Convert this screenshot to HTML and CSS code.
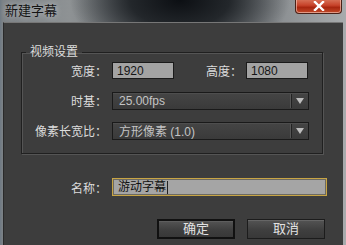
FILE: index.html
```html
<!DOCTYPE html>
<html lang="zh-CN">
  <head>
    <meta charset="UTF-8" />
    <meta name="viewport" content="width=device-width, initial-scale=1.0" />
    <title>新建字幕</title>
    <link rel="stylesheet" href="styles.css">
  </head>
  <body>
    <div class="window">
      <div class="titlebar">
        <span class="title">新建字幕</span>
        <div class="close-btn">
          <svg width="14" height="10" viewBox="0 0 14 10">
            <path d="M3 1 L11 9 M11 1 L3 9" stroke="#fff" stroke-width="2.4" stroke-linecap="square" />
          </svg>
        </div>
      </div>

      <div class="dialog">
        <fieldset class="video-settings">
          <legend>视频设置</legend>

          <div class="row">
            <label class="label">宽度：</label>
            <input class="text-input small" type="text" value="1920" />
            <label class="label label-right">高度：</label>
            <input class="text-input small" type="text" value="1080" />
          </div>

          <div class="row">
            <label class="label">时基：</label>
            <div class="select">
              <span class="select-value">25.00fps</span>
              <span class="select-arrow"></span>
            </div>
          </div>

          <div class="row">
            <label class="label">像素长宽比：</label>
            <div class="select">
              <span class="select-value">方形像素 (1.0)</span>
              <span class="select-arrow"></span>
            </div>
          </div>
        </fieldset>

        <div class="name-row">
          <label class="label">名称：</label>
          <div class="name-input">游动字幕<span class="caret"></span></div>
        </div>

        <div class="buttons">
          <button class="btn btn-default">确定</button>
          <button class="btn">取消</button>
        </div>
      </div>
    </div>
  </body>
</html>
```

FILE: styles.css
```css
html,
body {
  margin: 0;
  padding: 0;
}

body {
  font-family: "Liberation Sans", "Noto Sans CJK SC", sans-serif;
  font-size: 12px;
  background: #3d3d3d;
}

.window {
  width: 346px;
  height: 245px;
  display: flex;
  flex-direction: column;
  overflow: hidden;
  background:
    radial-gradient(ellipse 110px 60px at 52% 0, #0c0f13 0%, #23272b 45%, rgba(90, 95, 100, 0) 100%),
    linear-gradient(to right, #6f7a84 0, #7d8286 3px, #8e9294 20%, #5c6166 50%, #8a8e91 80%, #a8abad 100%);
}

.titlebar {
  height: 22px;
  display: flex;
  justify-content: space-between;
  align-items: flex-start;
  flex-shrink: 0;
}

.title {
  margin: 3px 0 0 5px;
  font-size: 13px;
  color: #141414;
  line-height: 16px;
  text-shadow: 0 0 6px rgba(210, 214, 218, 0.9);
}

.close-btn {
  width: 45px;
  height: 14px;
  margin: -1px 4px 0 0;
  display: flex;
  justify-content: center;
  align-items: center;
  border: 1px solid #4a2118;
  border-top: none;
  border-radius: 0 0 4px 4px;
  box-shadow: inset 0 0 0 1px rgba(255, 220, 210, 0.55);
  background: linear-gradient(to bottom, #d9765c 0%, #c7432a 45%, #a8260f 60%, #c24b2a 100%);
}

.dialog {
  flex: 1;
  margin: 0 3px;
  background: #3d3d3d;
  border-top: 1px solid #777;
  border-left: 1px solid #2a2a2a;
  display: flex;
  flex-direction: column;
}

.video-settings {
  margin: 22px 0 0 17px;
  width: 302px;
  height: 109px;
  box-sizing: border-box;
  padding: 3px 0 0 0;
  border: 1px solid #202020;
  box-shadow: 1px 1px 0 #555, inset 1px 1px 0 #555;
  min-width: 0;
}

.video-settings legend {
  margin-left: 4px;
  padding: 0 4px;
  color: #dcdcdc;
  font-size: 12px;
  line-height: 14px;
}

.row {
  display: flex;
  align-items: center;
  height: 17px;
  margin-bottom: 13px;
}

.label {
  width: 85px;
  text-align: right;
  color: #dcdcdc;
  margin-right: 5px;
  white-space: nowrap;
}

.label-right {
  width: 68px;
  margin-right: 4px;
}

.text-input {
  box-sizing: border-box;
  height: 17px;
  border: 1px solid #1a1a1a;
  background: #a3a3a3;
  color: #151515;
  font-family: inherit;
  font-size: 12px;
  padding: 0 0 0 4px;
  outline: none;
}

.text-input.small {
  width: 62px;
}

.select {
  box-sizing: border-box;
  width: 197px;
  height: 18px;
  border: 1px solid #1a1a1a;
  background: linear-gradient(to bottom, #454545, #3a3a3a);
  box-shadow: inset 0 1px 0 #4e4e4e;
  display: flex;
  align-items: center;
}

.select-value {
  flex: 1;
  padding-left: 6px;
  color: #c4c4c4;
}

.select-arrow {
  width: 16px;
  height: 14px;
  border-left: 1px solid #222;
  box-shadow: -1px 0 0 #555;
  position: relative;
}

.select-arrow::after {
  content: "";
  position: absolute;
  left: 4px;
  top: 4px;
  border-left: 4px solid transparent;
  border-right: 4px solid transparent;
  border-top: 6px solid #bdbdbd;
}

.name-row {
  display: flex;
  align-items: center;
  margin: 24px 0 0 18px;
}

.name-row .label {
  width: 85px;
  margin-right: 5px;
}

.name-input {
  box-sizing: border-box;
  width: 215px;
  height: 18px;
  border: 1px solid #c8a545;
  box-shadow: inset 0 0 0 1px #6d6a60;
  background: #a5a5a5;
  color: #111;
  padding-left: 5px;
  line-height: 16px;
  display: flex;
  align-items: center;
}

.caret {
  display: inline-block;
  width: 1px;
  height: 13px;
  margin-left: 1px;
  background: #222;
}

.buttons {
  display: flex;
  justify-content: flex-end;
  gap: 12px;
  margin: 23px 18px 0 0;
}

.btn {
  width: 78px;
  height: 20px;
  box-sizing: border-box;
  padding: 0;
  border: 1px solid #1c1c1c;
  background: linear-gradient(to bottom, #545454, #3f3f3f 55%, #383838);
  box-shadow: inset 0 1px 0 #666;
  color: #e2e2e2;
  font-family: inherit;
  font-size: 13px;
  line-height: 16px;
}

.btn-default {
  border: 2px solid #111;
  box-shadow: inset 0 1px 0 #5e5e5e;
}
```
